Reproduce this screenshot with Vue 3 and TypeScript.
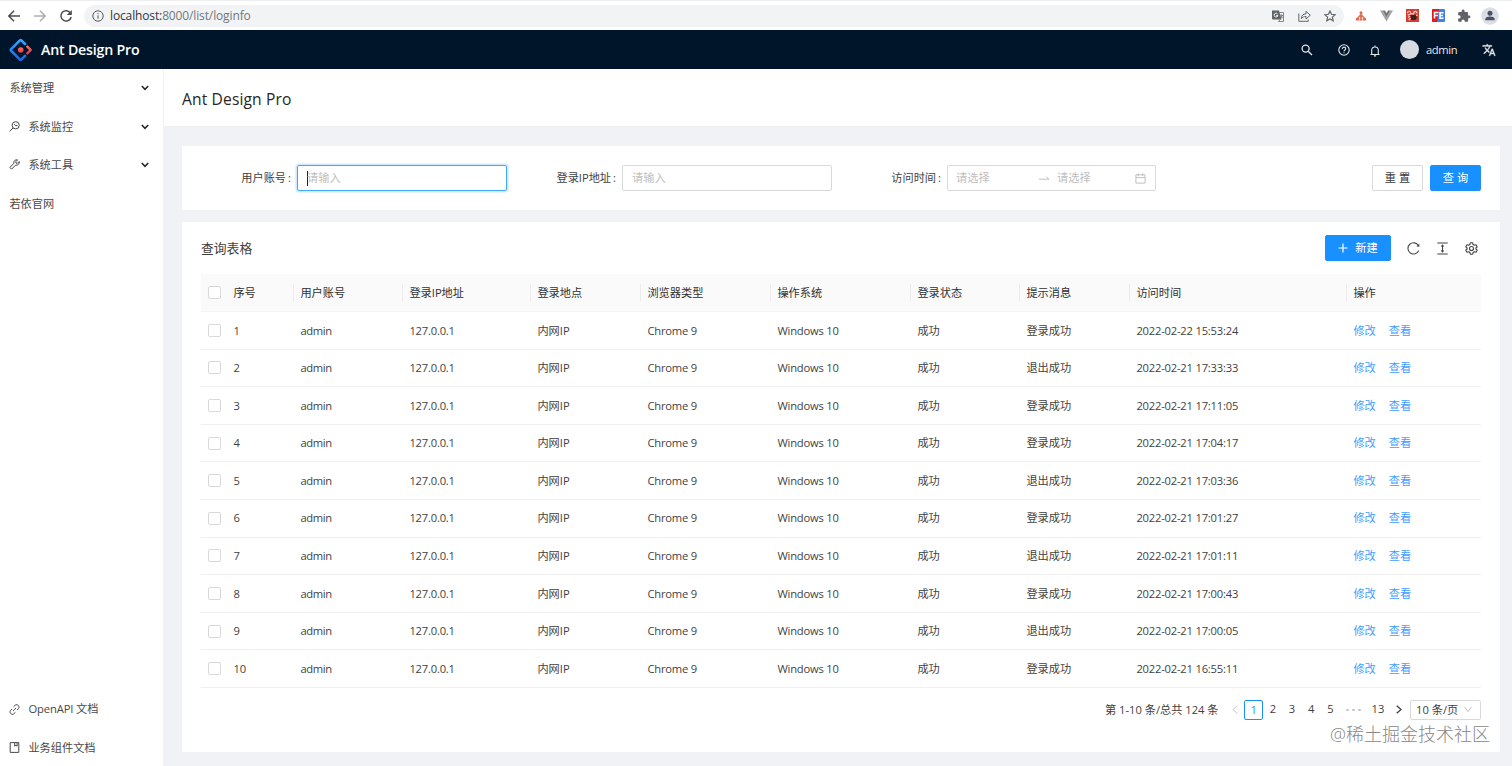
<script setup lang="ts">
interface LogRow {
  id: number
  message: string
  time: string
}

const columns: string[] = [
  '序号', '用户账号', '登录IP地址', '登录地点', '浏览器类型',
  '操作系统', '登录状态', '提示消息', '访问时间', '操作',
]

const rows: LogRow[] = [
  { id: 1, message: '登录成功', time: '2022-02-22 15:53:24' },
  { id: 2, message: '退出成功', time: '2022-02-21 17:33:33' },
  { id: 3, message: '登录成功', time: '2022-02-21 17:11:05' },
  { id: 4, message: '登录成功', time: '2022-02-21 17:04:17' },
  { id: 5, message: '退出成功', time: '2022-02-21 17:03:36' },
  { id: 6, message: '登录成功', time: '2022-02-21 17:01:27' },
  { id: 7, message: '退出成功', time: '2022-02-21 17:01:11' },
  { id: 8, message: '登录成功', time: '2022-02-21 17:00:43' },
  { id: 9, message: '退出成功', time: '2022-02-21 17:00:05' },
  { id: 10, message: '登录成功', time: '2022-02-21 16:55:11' },
]

const pages: number[] = [1, 2, 3, 4, 5]
</script>

<template>
  <div class="window">
    <div class="browser">
      <div class="nav-icons">
        <svg width="14" height="14" viewBox="0 0 14 14" class="line nav"><path d="M13 7H2M7 1.8 1.8 7 7 12.2" /></svg>
        <svg width="14" height="14" viewBox="0 0 14 14" class="line nav dim"><path d="M1 7h11M7 1.8 12.2 7 7 12.2" /></svg>
        <svg width="14" height="14" viewBox="0 0 14 14" class="line nav"><path d="M11.6 4.2A5.2 5.2 0 1 0 12.2 8" /><path d="M12.8 1v5H7.8z" fill="#4a4d51" stroke="none" /></svg>
      </div>
      <div class="address">
        <svg width="12" height="12" viewBox="0 0 12 12" class="line info"><circle cx="6" cy="6" r="5.2" /><path d="M6 5.3v3.4M6 3v1.2" /></svg>
        <span class="url"><b>localhost:</b>8000/list/loginfo</span>
        <div class="address-tools">
          <svg width="12" height="12" viewBox="0 0 12 12"><path d="M0 .5h7l2.5 9H1a1 1 0 0 1-1-1z" fill="#5f6368" /><path d="M7.500 2.500h4v9h-5l1.800-2M8 5.300h3M9.500 4.500v1M10.500 5.300C10 7 9 8 8.400 8.200M8.700 6l2 2.400" fill="none" stroke="#6b6f74" stroke-width=".8" /><path d="M5.600 4A1.900 1.900 0 1 0 5.900 5.400H4.200" fill="none" stroke="#fff" stroke-width=".9" /></svg>
          <svg width="13" height="12" viewBox="0 0 13 12" class="line tool"><path d="M.8 3.500v7.800h9.400V9.500M3.200 8.600C3.400 5.500 5 3.900 8 3.900V1.300L12.300 5.200 8 9V6.500C5.800 6.500 4.500 7.200 3.200 8.600z" /></svg>
          <svg width="12" height="12" viewBox="0 0 12 12" class="line tool star"><path d="M6 1l1.500 3.300 3.600.4-2.700 2.400.8 3.600L6 8.900 2.800 10.700l.8-3.600L.9 4.700l3.600-.4z" /></svg>
        </div>
      </div>
      <div class="extensions">
        <svg width="12" height="12" viewBox="0 0 12 12"><path d="M6 2v8M6 4.500 2.500 8M6 4.500 9.500 8" stroke="#e2694f" stroke-width="1.100" fill="none" /><circle cx="6" cy="2.700" r="1.500" fill="#e2694f" /><path d="M4.700 6h2.600v1.800H4.700zM1 8h3v2.500H1zM4.600 8.500h2.800v2H4.600zM8 8h3v2.500H8z" fill="#e2694f" /></svg>
        <svg width="13" height="12" viewBox="0 0 13 12"><path d="M0 .5h2.600l3.900 6.700L10.400.5H13L6.500 11.500z" fill="#a5a5a5" /><path d="M2.600.5h2.300l1.600 2.800L8.100.5h2.300L6.500 7.200z" fill="#747474" /></svg>
        <svg width="13" height="13" viewBox="0 0 13 13"><path d="M0 0h13v13H0z" fill="#d53c32" /><path d="M4.500 5.500h5l1.500 3-1.500 2.500H5z" fill="#40201c" /><path d="M1.500 4.200c0-2.500 2.800-2.500 3-.4M7.700 3.800c.4-2.200 3.500-1.800 3.300.6M1.800 6.200l2.700-1.400h4M2 8.500l2-1.200M2.800 11l1.700-1.800M10 6.500l1.500-.4" fill="none" stroke="#ffd9d2" stroke-width="1.200" /></svg>
        <svg width="13" height="13" viewBox="0 0 13 13"><rect width="13" height="13" rx="1" fill="#3f83ea" /><path d="M1 0h6L5 13H1a1 1 0 0 1-1-1V1a1 1 0 0 1 1-1z" fill="#dc1b22" /><path d="M2.500 9.500v-6h4M2.500 6.500H6M11.500 3.700H8v5.500h3.500M8 6.500h3" fill="none" stroke="#fff" stroke-width="1.500" /></svg>
        <svg width="14" height="14" viewBox="0 0 24 24"><path fill="#5f6368" d="M20.500 11H19V7a2 2 0 0 0-2-2h-4V3.500a2.500 2.500 0 0 0-5 0V5H4a2 2 0 0 0-2 2v3.800h1.500a2.700 2.700 0 0 1 0 5.400H2V20a2 2 0 0 0 2 2h3.800v-1.500a2.700 2.700 0 0 1 5.400 0V22H17a2 2 0 0 0 2-2v-4h1.500a2.500 2.500 0 0 0 0-5z" /></svg>
        <svg width="18" height="18" viewBox="0 0 18 18"><circle cx="9" cy="9" r="8.700" fill="#dcdee5" /><circle cx="9" cy="6.200" r="2.500" fill="#4b5065" /><path d="M4.300 13.300V12c0-1.700 3-2.500 4.700-2.500s4.700.8 4.700 2.500v1.300z" fill="#4b5065" /></svg>
      </div>
    </div>

    <header class="topbar">
      <svg class="logo" width="24" height="24" viewBox="0 0 24 24">
        <defs><linearGradient id="logo-blue" x1="0" y1="0" x2="0" y2="1"><stop offset="0" stop-color="#36a5ff" /><stop offset="1" stop-color="#1769ef" /></linearGradient><linearGradient id="logo-red" x1="0" y1="0" x2="0" y2="1"><stop offset="0" stop-color="#fa7069" /><stop offset="1" stop-color="#ee3345" /></linearGradient></defs>
        <path d="M16 6 12.300 2.400Q11.600 1.800 10.900 2.400L2.200 11.200Q1.400 12 2.200 12.800L10.900 21.600Q11.600 22.200 12.300 21.600L16 17.900" fill="none" stroke="url(#logo-blue)" stroke-width="2.600" stroke-linecap="round" />
        <path d="M18.300 8.600l3.400 3.400-3.400 3.400" fill="none" stroke="url(#logo-red)" stroke-width="2.400" stroke-linecap="round" stroke-linejoin="round" />
        <circle cx="11.700" cy="12" r="2.800" fill="url(#logo-red)" />
      </svg>
      <h1>Ant Design Pro</h1>
      <div class="top-actions">
        <svg class="line act-search" width="12" height="12" viewBox="0 0 12 12"><circle cx="4.600" cy="4.600" r="3.500" /><path d="M7.200 7.200l3.800 3.800" /></svg>
        <svg class="line act-help" width="12" height="12" viewBox="0 0 12 12"><circle cx="6" cy="6" r="5.200" /><path d="M4.300 4.900C4.300 2.500 7.700 2.600 7.700 4.800 7.700 6 6 5.900 6 7.300M6 8.200v1" /></svg>
        <svg class="line act-bell" width="10" height="12" viewBox="0 0 10 12"><path d="M.5 9.500h9M1.700 9.500V5.300a3.300 3.300 0 0 1 6.600 0v4.200M5 2V.6M3.900 10.900h2.200" /></svg>
        <span class="avatar"></span>
        <span class="user">admin</span>
        <svg class="act-lang" width="14" height="14" viewBox="0 0 24 24"><path fill="#e6e8ea" stroke="#e6e8ea" stroke-width=".5" d="M12.870 15.070l-2.540-2.510.03-.03c1.740-1.940 2.980-4.170 3.710-6.530H17V4h-7V2H8v2H1v1.990h11.170C11.500 7.920 10.440 9.750 9 11.350 8.070 10.320 7.300 9.190 6.690 8h-2c.73 1.630 1.730 3.170 2.980 4.560l-5.090 5.020L4 19l5-5 3.110 3.110.76-2.040zM18.500 10h-2L12 22h2l1.120-3h4.750L21 22h2l-4.500-12zm-2.620 7l1.620-4.330L19.120 17h-3.240z" /></svg>
      </div>
    </header>

    <div class="body">
      <aside class="sidebar">
        <div class="menu-item">
          <span>系统管理</span>
          <svg class="line caret" width="8" height="6" viewBox="0 0 8 6"><path d="M.8 1 4 4.300 7.200 1" /></svg>
        </div>
        <div class="menu-item">
          <svg class="line menu-icon" width="11" height="11" viewBox="0 0 11 11"><circle cx="6.700" cy="4.300" r="3.600" /><path d="M4.100 6.900.6 10.400M5.200 3.200l1.500 1.500 1.800-.2" /></svg>
          <span>系统监控</span>
          <svg class="line caret" width="8" height="6" viewBox="0 0 8 6"><path d="M.8 1 4 4.300 7.200 1" /></svg>
        </div>
        <div class="menu-item">
          <svg class="line menu-icon" width="11" height="11" viewBox="0 0 11 11"><path d="M8.600.9 6.800 2.700l.2 1.400 1.400.2 1.800-1.800C10.700 4.700 9 6.700 6.500 6.200L2.600 10.200.8 8.400l4-3.900C4.300 2 6.300.3 8.600.9z" /></svg>
          <span>系统工具</span>
          <svg class="line caret" width="8" height="6" viewBox="0 0 8 6"><path d="M.8 1 4 4.300 7.200 1" /></svg>
        </div>
        <div class="menu-item"><span>若依官网</span></div>
        <div class="menu-links">
          <div class="menu-item">
            <svg class="line menu-icon" width="11" height="11" viewBox="0 0 11 11"><path d="M4.600 2.700 6.200 1.200C8.200-.6 11.300 2.500 9.500 4.500L8 6.100M6.400 8.300 4.800 9.800C2.800 11.600-.3 8.500 1.500 6.500L3 4.900M3.900 7.100l3.200-3.200" /></svg>
            <span class="api">OpenAPI 文档</span>
          </div>
          <div class="menu-item">
            <svg class="line menu-icon" width="11" height="11" viewBox="0 0 11 11"><path d="M1.200.6h8.600v9.800H1.200zM5.700.6v3.600l1.200-1 1.200 1V.6" /></svg>
            <span>业务组件文档</span>
          </div>
        </div>
      </aside>

      <main class="main">
        <div class="page-header"><h2>Ant Design Pro</h2></div>

        <section class="card search-card">
          <label class="field first"><span>用户账号<i>:</i></span><div class="input focused"><em class="cursor"></em>请输入</div></label>
          <label class="field second"><span>登录IP地址<i>:</i></span><div class="input">请输入</div></label>
          <label class="field third"><span>访问时间<i>:</i></span>
            <div class="input range">
              <span class="range-start">请选择</span>
              <svg width="11" height="6" viewBox="0 0 11 6" class="line"><path d="M0 4.200h10L7.500 1.800" /></svg>
              <span class="range-end">请选择</span>
              <svg width="11" height="11" viewBox="0 0 11 11" class="line"><path d="M.9 1.800h9.200v8.300H.9zM.9 4.600h9.200M3.300.4v2.500M7.700.4v2.500" /></svg>
            </div>
          </label>
          <div class="search-buttons">
            <button class="btn">重 置</button>
            <button class="btn primary">查 询</button>
          </div>
        </section>

        <section class="card table-card">
          <div class="toolbar">
            <h3>查询表格</h3>
            <button class="btn primary create">
              <svg class="line" width="10" height="10" viewBox="0 0 10 10"><path d="M5 .5v9M.5 5h9" /></svg>新建
            </button>
            <svg class="line tb" width="13" height="13" viewBox="0 0 13 13"><path d="M11.400 3.600A5.600 5.600 0 1 0 11.700 8.600" /><path d="M12.300 1.800v3l-2.900-.4z" fill="#444" stroke="none" /></svg>
            <svg class="line tb" width="13" height="13" viewBox="0 0 13 13"><path d="M1.300 1h10.400M1.300 12h10.400M6.500 3.500v6" /><path d="M6.500 2.300 8.300 4.600H4.700zM6.500 10.700 4.700 8.400h3.600z" fill="#444" stroke="none" /></svg>
            <svg class="line tb" width="13" height="13" viewBox="0 0 13 13"><circle cx="6.500" cy="6.500" r="2" /><path d="M5.300.8h2.400l.4 1.700 1.200.7 1.700-.5 1.200 2.100-1.300 1.200v1l1.300 1.200L11 10.300l-1.700-.5-1.200.7-.4 1.700H5.300l-.4-1.700-1.200-.7-1.700.5L.8 8.200 2.100 7V6L.8 4.800 2 2.700l1.700.5 1.200-.7z" stroke-linejoin="round" /></svg>
          </div>

          <div class="table">
            <div class="tr head">
              <div class="check"><span class="box"></span></div>
              <div v-for="name in columns" :key="name" class="th">{{ name }}</div>
            </div>
            <div v-for="row in rows" :key="row.id" class="tr">
              <div class="check"><span class="box"></span></div>
              <div>{{ row.id }}</div>
              <div class="account">admin</div>
              <div class="num">127.0.0.1</div>
              <div>内网IP</div>
              <div class="num">Chrome 9</div>
              <div class="num">Windows 10</div>
              <div>成功</div>
              <div>{{ row.message }}</div>
              <div class="num">{{ row.time }}</div>
              <div class="ops"><a>修改</a><a>查看</a></div>
            </div>
          </div>

          <div class="pagination">
            <span class="total">第 1-10 条/总共 124 条</span>
            <svg class="line arrow off" width="6" height="9" viewBox="0 0 6 9"><path d="M5.300.7.9 4.500l4.400 3.800" /></svg>
            <span v-for="page in pages" :key="page" class="page" :class="{ current: page === 1 }">{{ page }}</span>
            <span class="dots"><i></i><i></i><i></i></span>
            <span class="page last">13</span>
            <svg class="line arrow" width="6" height="9" viewBox="0 0 6 9"><path d="M.7.7l4.400 3.800L.7 8.300" /></svg>
            <span class="size">10 条/页<svg class="line" width="8" height="7" viewBox="0 0 8 7"><path d="M.6.8 4 5.700 7.400.8" /></svg></span>
          </div>
        </section>
      </main>
    </div>
    <div class="watermark">@稀土掘金技术社区</div>
  </div>
</template>

<style>
body { margin: 0; overflow: hidden; }
</style>

<style scoped>
* { box-sizing: border-box; }
.window {
  position: relative;
  width: 1512px;
  height: 766px;
  overflow: hidden;
  display: flex;
  flex-direction: column;
  background: #f0f2f5;
  color: #3f3f3f;
  font: 11.2px/17.6px "Open Sans", "Noto Sans CJK SC", sans-serif;
}
svg { display: block; flex: none; }
h1, h2, h3 { margin: 0; }
i, em { font-style: normal; }
.line { fill: none; stroke: currentColor; stroke-width: 1; }

.browser { height: 30px; flex: none; display: flex; align-items: center; background: #fff; padding-left: 7px; border-top: 1px solid #eceef0; }
.nav-icons { display: flex; gap: 12px; width: 77px; color: #4a4d51; }
.nav { stroke-width: 1.5; }
.dim { color: #acaeb1; }
.address { width: 1260px; height: 22px; border-radius: 11px; background: #f1f3f4; display: flex; align-items: center; padding: 0 8px; }
.info { color: #55585c; margin-right: 6px; }
.url { font-size: 12px; color: #73777b; letter-spacing: -0.13px; }
.url b { font-weight: 400; color: #333639; }
.address-tools { margin-left: auto; display: flex; gap: 13.500px; }
.tool { color: #63676b; }
.star { stroke-width: 1.2; }
.extensions { display: flex; align-items: center; margin-left: 11px; gap: 13px; }
.extensions svg:nth-last-child(2) { margin-left: -1px; }
.extensions svg:last-child { margin-left: -3px; }

.topbar { height: 39px; flex: none; background: #001529; color: #fff; display: flex; align-items: center; padding-left: 9px; }
.logo { margin-right: 8px; }
h1 { font-size: 14.2px; line-height: 20px; font-weight: 600; letter-spacing: -0.2px; }
.top-actions { margin-left: auto; height: 39px; display: flex; align-items: center; color: #e4e7e9; padding-right: 16px; }
.act-search { margin-right: 25px; stroke-width: 1.3; }
.act-help { margin-right: 20px; stroke-width: 1.1; }
.act-bell { margin-right: 20px; margin-top: 3px; stroke-width: 1.1; }
.avatar { width: 19px; height: 19px; border-radius: 50%; background: #d6dbe2; margin-right: 7px; }
.user { width: 56px; letter-spacing: -0.35px; font-weight: 500; }

.body { flex: 1; display: flex; min-height: 0; }
.sidebar { width: 163px; background: #fff; display: flex; flex-direction: column; padding-bottom: 0; }
.menu-item { height: 38.4px; flex: none; display: flex; align-items: center; padding: 0 14px 0 9.4px; color: #484848; }
.menu-icon { margin-right: 8px; }
.caret { margin-left: auto; stroke-width: 1.5; color: #222; }
.menu-links { margin-top: auto; margin-bottom: -0.6px; }
.api { letter-spacing: -0.1px; }

.main { flex: 1; }
.page-header { height: 58px; margin-left: 1px; background: #fff; border-bottom: 1px solid #eceef1; padding: 20px 18px; }
h2 { font-size: 15.6px; line-height: 20px; font-weight: 500; color: #262626; letter-spacing: 0.13px; }
.card { margin-left: 19px; width: 1318px; background: #fff; }
.search-card { margin-top: 19px; height: 64px; display: flex; align-items: center; padding-right: 19px; }
.field { display: flex; align-items: center; }
.field > span { display: flex; justify-content: flex-end; }
.field > span i { margin: 0 6px 0 2px; }
.first > span { width: 115px; }
.second > span { width: 115px; }
.third > span { width: 115px; }
.input { width: 210px; height: 26px; border: 1px solid #d9d9d9; border-radius: 2px; display: flex; align-items: center; padding: 0 9px; color: #bfbfbf; position: relative; }
.focused { border-color: #40a9ff; box-shadow: 0 0 0 1.6px rgba(24, 144, 255, 0.2); }
.cursor { width: 1px; height: 15px; background: #222; margin-right: -1px; }
.range { width: 209px; padding: 0 8px; }
.range-start { width: 83px; }
.range-end { margin-left: 7px; width: 78px; }
.search-buttons { margin-left: auto; display: flex; gap: 7px; }
.btn { width: 51px; height: 26px; padding: 0; border: 1px solid #d9d9d9; border-radius: 2px; background: #fff; color: #3b3b3b; font: inherit; display: flex; align-items: center; justify-content: center; }
.primary { border-color: #1890ff; background: #1890ff; color: #fff; }

.table-card { margin-top: 12px; height: 530px; padding: 0 19px; }
.toolbar { height: 52px; display: flex; align-items: center; padding-right: 3px; }
h3 { font-size: 12.8px; font-weight: 400; margin-right: auto; padding-top: 1px; }
.create { width: 66px; }
.create svg { margin-right: 7px; stroke-width: 1.2; }
.tb { margin-left: 16px; color: #444; stroke-width: 1.1; }
.table { width: 1280px; }
.tr { display: grid; grid-template-columns: 26px 67px 109px 128px 110px 130px 140px 109px 110px 217px 134px; height: 37.6px; align-items: center; border-bottom: 1px solid #f0f0f0; }
.tr > div { padding-left: 6.4px; white-space: nowrap; }
.tr > .check { padding-left: 7px; }
.head { height: 38px; background: #fafafa; border-bottom-color: #f5f5f5; color: #303030; }
.head .th { position: relative; }
.head .th:not(:last-child)::after { content: ""; position: absolute; right: 0; top: 0; width: 1px; height: 17px; background: #ececec; }
.box { display: block; width: 13px; height: 13px; border: 1px solid #d9d9d9; border-radius: 2px; background: #fff; }
.num { letter-spacing: -0.2px; }
.account { letter-spacing: -0.35px; }
.ops { display: flex; gap: 13px; color: #3f9dff; }

.pagination { display: flex; align-items: center; justify-content: flex-end; height: 20px; margin-top: 12px; }
.total { margin-right: 13.5px; }
.arrow { margin: 0 6px 0 7px; stroke-width: 1.3; }
.off { color: #c8c8c8; margin-left: 0; stroke-width: 1; }
.page { width: 19.200px; height: 19.200px; line-height: 18px; text-align: center; }
.current { border: 1px solid #1890ff; border-radius: 2px; color: #1890ff; line-height: 17px; }
.dots { display: flex; gap: 3px; width: 27px; justify-content: center; }
.dots i { width: 3px; height: 2px; border-radius: 1px; background: #c4c4c4; }
.last { width: 22px; }
.size { width: 71px; height: 20px; border: 1px solid #d9d9d9; border-radius: 2px; display: flex; align-items: center; padding-left: 5px; margin-left: 2px; }
.size svg { margin-left: 6px; color: #c0c0c0; }

.watermark { position: absolute; right: 22px; bottom: 19px; font-size: 18px; line-height: 26px; font-weight: 300; color: #888; }
</style>
